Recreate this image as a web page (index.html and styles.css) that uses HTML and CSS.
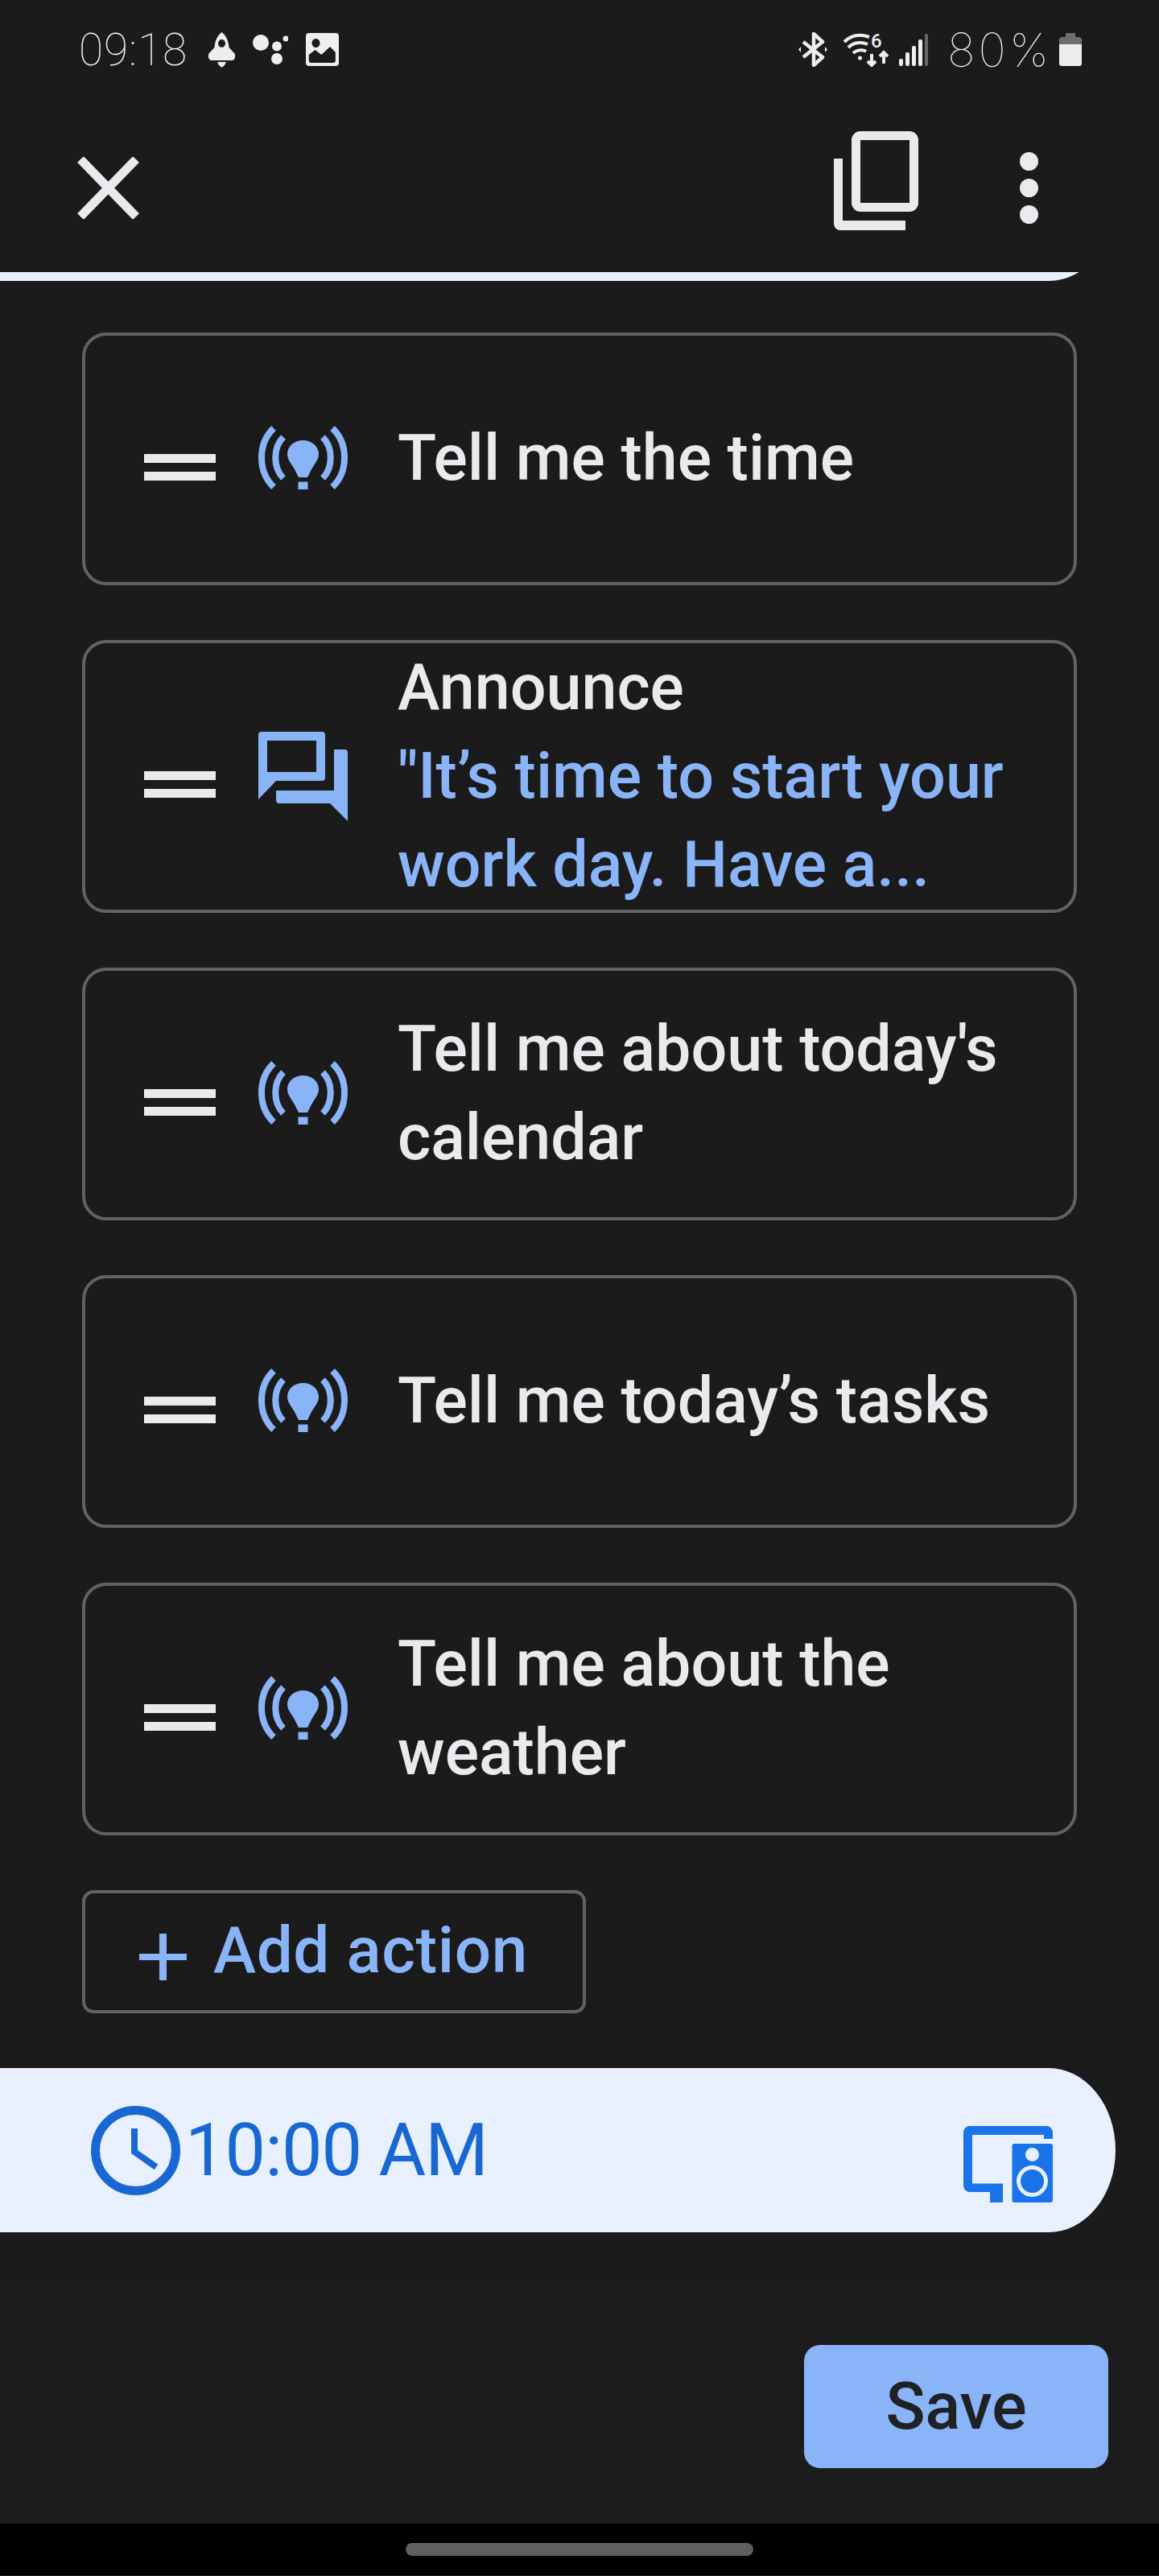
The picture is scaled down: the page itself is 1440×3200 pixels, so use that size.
FILE: index.html
```html
<!DOCTYPE html>
<html lang="en">
<head>
  <meta charset="UTF-8">
  <title>Routine actions</title>
  <link rel="stylesheet" href="styles.css">
</head>
<body>
  <svg class="defs" width="0" height="0">
    <symbol id="bulb" viewBox="0 0 111 79">
      <path d="M36 35C36 25 45 18 55.500 18C66 18 75 25 75 35C75 42 70 47 66 54L61 64H50L45 54C41 47 36 42 36 35Z"/>
      <rect x="49.500" y="69.500" width="12" height="9.500"/>
      <g class="bulb-waves">
        <path d="M19 3C-1 22 -1 57 19 76"/>
        <path d="M31 14C18 27 18 52 31 65"/>
        <path d="M92 3C112 22 112 57 92 76"/>
        <path d="M80 14C93 27 93 52 80 65"/>
      </g>
    </symbol>
    <symbol id="drag" viewBox="0 0 89 33">
      <rect width="89" height="11"/>
      <rect y="22" width="89" height="11"/>
    </symbol>
  </svg>

  <div class="status-bar">
    <div class="status-left">
      <span class="status-text time">09:18</span>
      <svg class="st-rocket" width="33" height="44" viewBox="0 0 33 44">
        <path fill-rule="evenodd" d="M16.500 0C22 4 25 11 25.500 19L33 27V31C33 33 31 35 29 35H4C2 35 0 33 0 31V27L7.500 19C8 11 11 4 16.500 0ZM16.500 9A4.500 5 0 1 0 16.500 19A4.500 5 0 1 0 16.500 9Z"/>
        <path d="M11 37H22L20 41L16.500 44L13 41Z"/>
      </svg>
      <svg width="44" height="37" viewBox="0 0 44 37">
        <circle cx="10" cy="10" r="10"/>
        <circle cx="30" cy="14.500" r="6"/>
        <circle cx="30" cy="30" r="7"/>
        <circle cx="41" cy="5" r="3.500"/>
      </svg>
      <svg width="41" height="41" viewBox="0 0 41 41">
        <path fill-rule="evenodd" d="M4 0H37A4 4 0 0 1 41 4V37A4 4 0 0 1 37 41H4A4 4 0 0 1 0 37V4A4 4 0 0 1 4 0ZM12.500 7A5 5.500 0 1 0 12.500 18A5 5.500 0 1 0 12.500 7ZM3.700 27L11.500 21L19.400 27L30 17L36.800 24V34A3 3 0 0 1 33.800 37H6.700A3 3 0 0 1 3.700 34Z"/>
      </svg>
    </div>
    <div class="status-right">
      <svg class="bt" width="36" height="43" viewBox="0 0 36 43">
        <path d="M6 12L30 31L19 41V2L30 12L6 31" fill="none" stroke="#eee" stroke-width="4.500" stroke-linejoin="round"/>
        <path d="M0 21.500L3 18V25ZM36 21.500L33 18V25Z"/>
      </svg>
      <svg class="wifi" width="57" height="48" viewBox="0 -6 57 48">
        <g fill="none" stroke="#eee" stroke-width="4">
          <path d="M2 11C11 2 22 1 33 5"/>
          <path d="M7 18C13 12 22 10 31 14"/>
          <path d="M13 25C17 21 25 20 29 23"/>
          <path d="M36 26V40M31 35L36 40L41 35"/>
          <path d="M51 38V24M46 29L51 24L56 29"/>
        </g>
        <circle cx="21.500" cy="31" r="2.500"/>
        <text class="wifi-six" x="35" y="18">6</text>
      </svg>
      <svg class="signal" width="36" height="40" viewBox="0 0 36 40">
        <rect x="0" y="31" width="5" height="9" rx="2"/>
        <rect x="8" y="23" width="5" height="17" rx="2"/>
        <rect x="16" y="15" width="5" height="25" rx="2"/>
        <rect x="24" y="7" width="5" height="33" rx="2"/>
        <rect class="signal-off" x="32" y="0" width="4" height="40" rx="2"/>
      </svg>
      <span class="status-text pct">80%</span>
      <svg class="battery" width="28" height="41" viewBox="0 0 28 41">
        <path class="battery-empty" d="M8 0H20V5H24A4 4 0 0 1 28 9V14H0V9A4 4 0 0 1 4 5H8Z"/>
        <path d="M0 14H28V38A3 3 0 0 1 25 41H3A3 3 0 0 1 0 38Z"/>
      </svg>
    </div>
  </div>

  <header class="app-bar">
    <svg class="ic-close" width="77" height="77" viewBox="0 0 77 77">
      <path d="M4 3L73 74M73 3L4 74"/>
    </svg>
    <div class="app-actions">
      <svg class="ic-copy" width="105" height="123" viewBox="0 0 105 123">
        <path fill-rule="evenodd" d="M33 0H94A11 11 0 0 1 105 11V89A11 11 0 0 1 94 100H33A11 11 0 0 1 22 89V11A11 11 0 0 1 33 0ZM33 11V89H94V11Z"/>
        <path d="M0 34H11V111H89V123H8A8 8 0 0 1 0 115Z"/>
      </svg>
      <svg class="ic-more" width="23" height="89" viewBox="0 0 23 89">
        <circle cx="11.500" cy="11.500" r="11.500"/>
        <circle cx="11.500" cy="44.500" r="11.500"/>
        <circle cx="11.500" cy="77.500" r="11.500"/>
      </svg>
    </div>
  </header>

  <div class="sheet-edge"><div class="sheet-pill"></div></div>

  <main class="actions">
    <div class="action-card">
      <svg class="drag"><use href="#drag"/></svg>
      <svg class="type-icon bulb"><use href="#bulb"/></svg>
      <div class="action-text">Tell me the time</div>
    </div>

    <div class="action-card">
      <svg class="drag"><use href="#drag"/></svg>
      <svg class="type-icon chat" viewBox="0 0 111 111">
        <path fill-rule="evenodd" d="M4 0H79A4 4 0 0 1 83 4V57A4 4 0 0 1 79 61H22L0 84V4A4 4 0 0 1 4 0ZM11 11V50H72V11Z"/>
        <path d="M94 22H107A4 4 0 0 1 111 26V111L89 89H26A4 4 0 0 1 22 85V73H94Z"/>
      </svg>
      <div class="action-text">Announce<br><span class="quote">"It’s time to start your<br>work day. Have a...</span></div>
    </div>

    <div class="action-card">
      <svg class="drag"><use href="#drag"/></svg>
      <svg class="type-icon bulb"><use href="#bulb"/></svg>
      <div class="action-text">Tell me about today's<br>calendar</div>
    </div>

    <div class="action-card">
      <svg class="drag"><use href="#drag"/></svg>
      <svg class="type-icon bulb"><use href="#bulb"/></svg>
      <div class="action-text">Tell me today’s tasks</div>
    </div>

    <div class="action-card">
      <svg class="drag"><use href="#drag"/></svg>
      <svg class="type-icon bulb"><use href="#bulb"/></svg>
      <div class="action-text">Tell me about the<br>weather</div>
    </div>

    <div class="add-action">
      <svg class="plus" width="59" height="58" viewBox="0 0 59 58">
        <rect x="25" width="9" height="58"/>
        <rect y="25" width="59" height="8"/>
      </svg>
      <span>Add action</span>
    </div>
  </main>

  <section class="time-bar">
    <svg class="clock" width="111" height="111" viewBox="0 0 111 111">
      <circle cx="55.500" cy="55.500" r="50"/>
      <path d="M54 28V57L81 76"/>
    </svg>
    <span class="time-label">10:00 AM</span>
    <svg class="devices" width="111" height="95" viewBox="0 0 111 95">
      <path d="M8 0H103A8 8 0 0 1 111 8V16H100V11H11V71.500H49V95H33V82H8A8 8 0 0 1 0 74V8A8 8 0 0 1 8 0Z"/>
      <rect x="60.500" y="22" width="50.500" height="73" rx="3"/>
      <circle class="speaker" cx="85.500" cy="35.500" r="8.500"/>
      <circle class="speaker-ring" cx="85.500" cy="68.500" r="17"/>
    </svg>
  </section>

  <footer class="footer">
    <button class="save">Save</button>
  </footer>

  <div class="nav-bar"><div class="home-pill"></div></div>
</body>
</html>
```

FILE: styles.css
```css
body {
  margin: 0;
  width: 1440px;
  height: 3200px;
  overflow: hidden;
  background-color: #1b1b1b;
  font-family: 'Roboto', sans-serif;
  color: #e8eaed;
}

.defs {
  display: block;
  height: 0;
}

svg {
  display: block;
  flex-shrink: 0;
}

/* status bar */
.status-bar {
  height: 123px;
  padding: 0 96px 0 98px;
  display: flex;
  justify-content: space-between;
  align-items: center;
  fill: #eee;
}

.status-left,
.status-right {
  display: flex;
  align-items: center;
}

.status-left {
  gap: 22px;
}

.status-right {
  gap: 13px;
}

.status-text {
  font-weight: 100;
  font-size: 55px;
  line-height: 60px;
  color: #f2f2f2;
}

.time {
  margin-right: 4px;
  letter-spacing: 1px;
}

.bt {
  margin-right: 6px;
}

.wifi {
  margin-bottom: 6px;
}

.pct {
  margin: 0 -4px 0 11px;
  font-family: 'Inter', sans-serif;
  font-size: 58px;
  letter-spacing: 4px;
}

.wifi-six {
  font-weight: 500;
  font-size: 24px;
}

.signal-off {
  fill: #666;
}

.battery-empty {
  fill: #6e6e6e;
}

/* app bar */
.app-bar {
  height: 209px;
  padding: 6px 150px 0 96px;
  display: flex;
  justify-content: space-between;
  align-items: center;
  fill: #e8eaed;
}

.app-actions {
  display: flex;
  align-items: center;
  gap: 126px;
}

.ic-close path {
  fill: none;
  stroke: #e8eaed;
  stroke-width: 11;
}

.ic-copy {
  margin-bottom: 18px;
}

.sheet-edge {
  height: 11px;
  overflow: hidden;
  display: flex;
  align-items: flex-end;
}

.sheet-pill,
.time-bar {
  width: 1386px;
  height: 204px;
  flex-shrink: 0;
  background-color: #e8f0fe;
  border-radius: 0 83px 83px 0 / 0 102px 102px 0;
}

/* action list */
.actions {
  width: 1238px;
  margin: 64px 0 68px 102px;
  display: flex;
  flex-direction: column;
  gap: 68px;
}

.action-card {
  box-sizing: border-box;
  min-height: 314px;
  width: 1236px;
  padding: 0.5px 0 0.5px 73px;
  display: flex;
  align-items: center;
  border: 4px solid #5f6368;
  border-radius: 30px;
}

.drag {
  width: 89px;
  height: 33px;
  margin: 20px 53px 0 0;
  fill: #e8eaed;
}

.type-icon {
  width: 111px;
  margin-right: 62px;
  fill: #8ab4f8;
}

.bulb {
  height: 79px;
  margin-bottom: 3px;
}

.chat {
  height: 111px;
}

.bulb-waves path {
  fill: none;
  stroke: #8ab4f8;
  stroke-width: 8;
}

.action-text {
  margin: -1px 0 1px;
  font-size: 79px;
  font-weight: 500;
  line-height: 110px;
  white-space: nowrap;
}

.quote {
  color: #8ab4f8;
}

.add-action {
  box-sizing: border-box;
  width: 626px;
  height: 153px;
  padding-left: 67px;
  display: flex;
  align-items: center;
  gap: 33px;
  border: 4px solid #5f6368;
  border-radius: 14px;
  font-size: 80px;
  font-weight: 500;
  letter-spacing: 0.6px;
  color: #8ab4f8;
  fill: #8ab4f8;
}

.add-action span {
  margin-bottom: 4px;
}

.plus {
  margin-top: 12px;
}

/* time + device bar */
.time-bar {
  box-sizing: border-box;
  padding: 0 78px 0 113px;
  display: flex;
  align-items: center;
}

.clock {
  fill: none;
  stroke: #1967d2;
}

.clock circle {
  stroke-width: 11;
}

.clock path {
  stroke-width: 8;
}

.time-label {
  flex: 1;
  margin-left: 6px;
  font-size: 90px;
  letter-spacing: -1px;
  color: #1967d2;
}

.devices {
  margin-top: 34px;
  fill: #1a73e8;
}

.speaker {
  fill: #e8f0fe;
}

.speaker-ring {
  fill: #1a73e8;
  stroke: #e8f0fe;
  stroke-width: 5;
}

/* footer */
.footer {
  box-sizing: border-box;
  height: 300px;
  margin-top: 62px;
  padding: 78px 63px 0 0;
  display: flex;
  justify-content: flex-end;
  align-items: flex-start;
  background-color: #1c1c1c;
}

.save {
  width: 378px;
  height: 153px;
  border: none;
  border-radius: 20px;
  background-color: #8ab4f8;
  font-family: 'Roboto', sans-serif;
  font-size: 81px;
  font-weight: 500;
  color: #202124;
}

.nav-bar {
  height: 64px;
  display: flex;
  justify-content: center;
  align-items: center;
  background-color: #000;
}

.home-pill {
  width: 432px;
  height: 16px;
  border-radius: 8px;
  background-color: #5f5f5f;
}
```
